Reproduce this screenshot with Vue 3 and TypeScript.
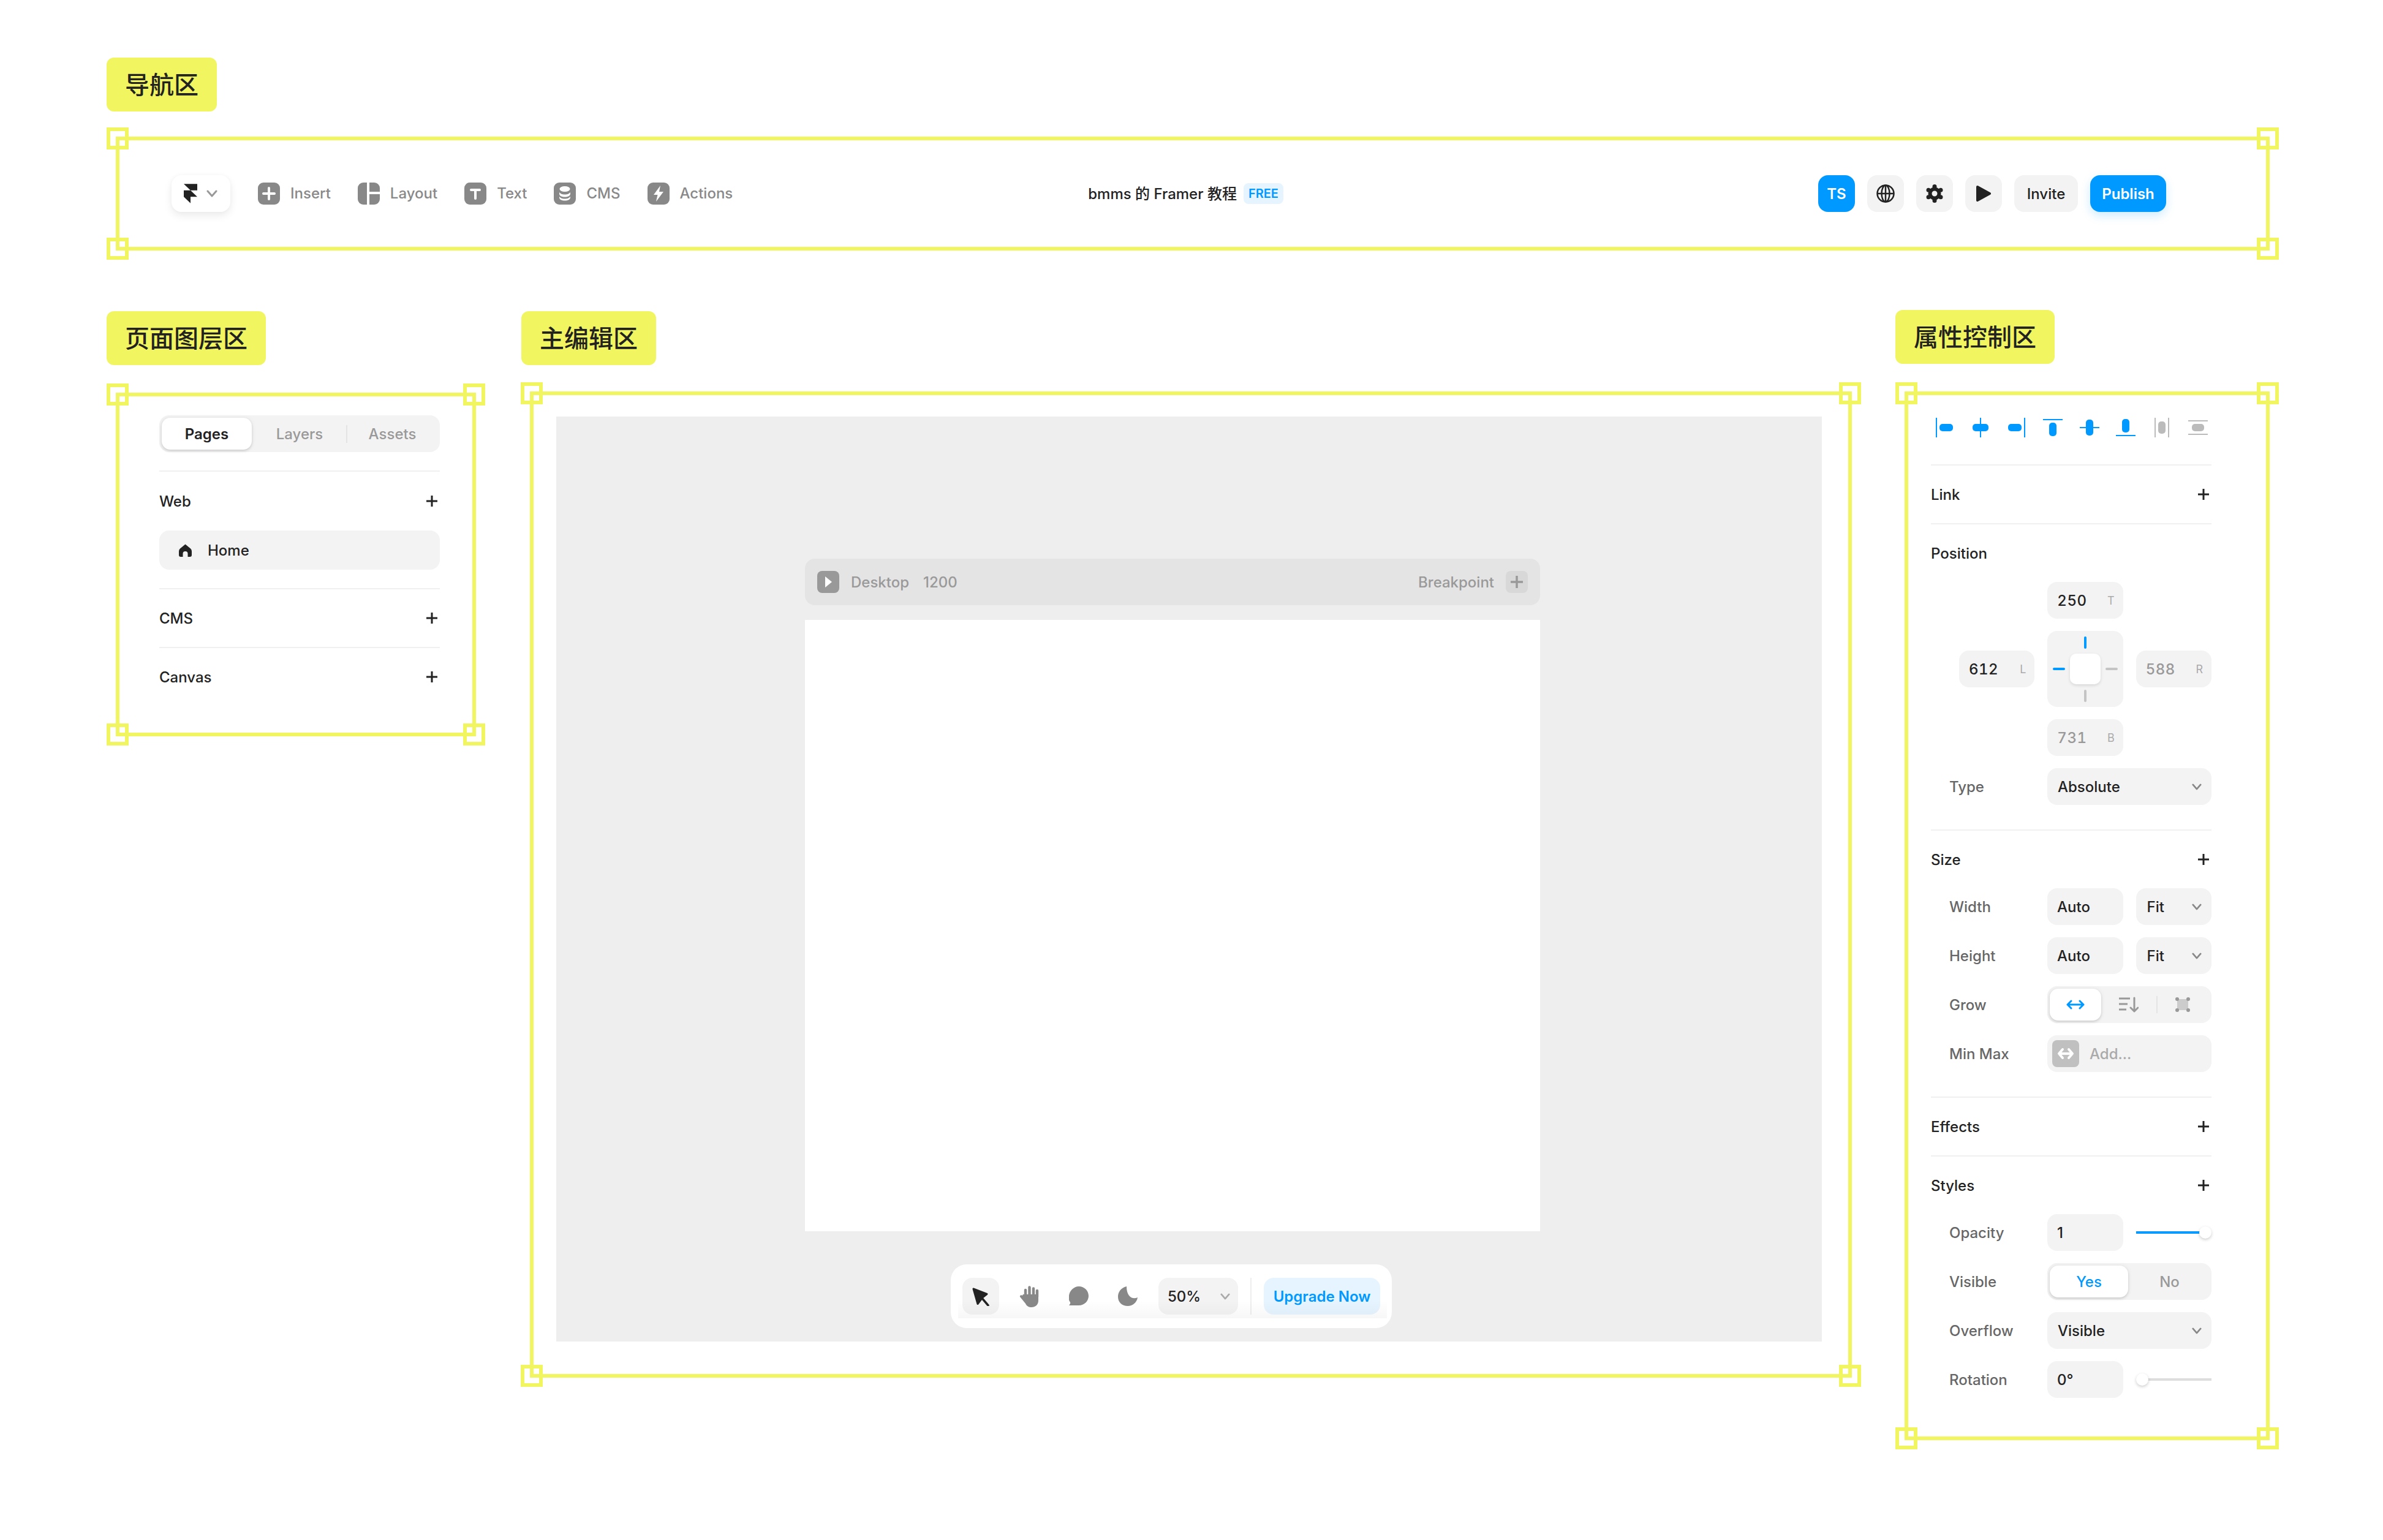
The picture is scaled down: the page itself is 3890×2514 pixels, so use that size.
<template>
  <div class="page">
    <!-- 导航区 -->
    <div class="tag">导航区</div>
    <section class="frame frame-nav">
      <i v-for="c in corners" :key="c" class="handle" :class="c"></i>
      <div class="logo-btn">
        <svg width="22" height="32" viewBox="0 0 14 20"><path fill="#222" d="M0 0h14v6.700H7zM0 6.700h7l7 6.600H7V20l-7-6.700z" /></svg>
        <svg width="18" height="12" viewBox="0 0 18 12"><path class="chev" stroke="#999" d="M2 2l7 8 7-8" /></svg>
      </div>
      <div class="nav-tools">
        <div class="nav-tool">
          <svg class="ico" viewBox="0 0 36 36"><rect width="36" height="36" rx="9" fill="#888" /><path class="w4" d="M18 9v18M9 18h18" /></svg>
          <span>Insert</span>
        </div>
        <div class="nav-tool">
          <svg class="ico" viewBox="0 0 36 36"><rect width="36" height="36" rx="9" fill="#888" /><path stroke="#fff" stroke-width="4" d="M17 0v36M17 17h19" /></svg>
          <span>Layout</span>
        </div>
        <div class="nav-tool">
          <svg class="ico" viewBox="0 0 36 36"><rect width="36" height="36" rx="9" fill="#888" /><path class="w4" d="M11 12h14M18 12v14" /></svg>
          <span>Text</span>
        </div>
        <div class="nav-tool">
          <svg class="ico" viewBox="0 0 36 36">
            <rect width="36" height="36" rx="9" fill="#888" />
            <ellipse cx="18" cy="10.500" rx="8.500" ry="4.500" fill="#fff" />
            <path fill="#fff" d="M9 15.500c1 2.500 4.500 4 9 4s8-1.500 9-4v3c0 3-4 5-9 5s-9-2-9-5zM9 22.500c1 2.500 4.500 4 9 4s8-1.500 9-4v2c0 3-4 5-9 5s-9-2-9-5z" />
          </svg>
          <span>CMS</span>
        </div>
        <div class="nav-tool">
          <svg class="ico" viewBox="0 0 36 36"><rect width="36" height="36" rx="9" fill="#888" /><path fill="#fff" d="M21 5L10 20h6.500L14 31l12-16h-7z" /></svg>
          <span>Actions</span>
        </div>
      </div>
      <div class="title">
        <span class="title-text">bmms 的 Framer 教程</span>
        <b class="free">FREE</b>
      </div>
      <div class="nav-actions">
        <div class="square ts">TS</div>
        <div class="square">
          <svg width="30" height="30" viewBox="0 0 30 30" fill="none" stroke="#222" stroke-width="2.500">
            <circle cx="15" cy="15" r="13.500" />
            <ellipse cx="15" cy="15" rx="6.500" ry="13.500" />
            <path d="M15 1.500v27M1.500 15h27" />
          </svg>
        </div>
        <div class="square">
          <svg width="30" height="30" viewBox="0 0 30 30">
            <circle cx="15" cy="15" r="7.500" fill="none" stroke="#222" stroke-width="6" />
            <circle v-for="g in gearLobes" :key="g[0]" :cx="g[0]" :cy="g[1]" r="3.500" fill="#222" />
          </svg>
        </div>
        <div class="square">
          <svg width="24" height="26" viewBox="0 0 24 26"><path fill="#222" stroke="#222" stroke-width="4" stroke-linejoin="round" d="M2 2l20 11L2 24z" /></svg>
        </div>
        <div class="text-btn">Invite</div>
        <div class="text-btn publish">Publish</div>
      </div>
    </section>

    <div class="columns">
      <!-- 页面图层区 -->
      <div class="column col-left">
        <div class="tag">页面图层区</div>
        <section class="frame frame-left">
          <i v-for="c in corners" :key="c" class="handle" :class="c"></i>
          <div class="tabs">
            <div class="tab active">Pages</div>
            <div class="tab second">Layers</div>
            <div class="tab third">Assets</div>
          </div>
          <div class="sec first">
            <div class="sec-head tall">
              <span>Web</span>
              <svg class="plus" viewBox="0 0 20 20"><path d="M10 1v18M1 10h18" /></svg>
            </div>
            <div class="page-row">
              <svg width="21" height="21" viewBox="0 0 21 21"><path fill="#222" d="M10.500 0.500L19 7.500Q21 9.200 21 12V18Q21 21 18 21H14.500V16A4 4 0 0 0 6.500 16V21H3Q0 21 0 18V12Q0 9.200 2 7.500z" /></svg>
              <span>Home</span>
            </div>
          </div>
          <div class="sec">
            <div class="sec-head">
              <span>CMS</span>
              <svg class="plus" viewBox="0 0 20 20"><path d="M10 1v18M1 10h18" /></svg>
            </div>
          </div>
          <div class="sec">
            <div class="sec-head">
              <span>Canvas</span>
              <svg class="plus" viewBox="0 0 20 20"><path d="M10 1v18M1 10h18" /></svg>
            </div>
          </div>
        </section>
      </div>

      <!-- 主编辑区 -->
      <div class="column col-main">
        <div class="tag">主编辑区</div>
        <section class="frame frame-main">
          <i v-for="c in corners" :key="c" class="handle" :class="c"></i>
          <div class="canvas">
            <div class="bp-head">
              <svg width="36" height="36" viewBox="0 0 36 36"><rect width="36" height="36" rx="8" fill="#999" /><path fill="#fff" d="M13 9l11 9-11 9z" /></svg>
              <span class="bp-name">Desktop</span>
              <span class="bp-size">1200</span>
              <span class="bp-add">Breakpoint</span>
              <div class="bp-plus">
                <svg width="20" height="20" viewBox="0 0 20 20"><path stroke="#999" stroke-width="3.500" d="M10 0v20M0 10h20" /></svg>
              </div>
            </div>
            <div class="artboard"></div>
            <div class="toolbar">
              <div class="tool on">
                <svg width="30" height="31" viewBox="0 0 30 31">
                  <path fill="#222" stroke="#222" stroke-width="3" stroke-linejoin="round" d="M3 3l22 8.500-7 5.500-8 10.500z" />
                  <path stroke="#222" stroke-width="3.500" stroke-linecap="round" d="M16 17l11 13" />
                </svg>
              </div>
              <div class="tool hand">
                <svg width="33" height="35" viewBox="0 0 33 35">
                  <path fill="#888" d="M7 14h25v10c0 7-5 11-11 11-5 0-8-2-10-6l-9-11c-1-2 2-4 4-2z" />
                  <path stroke="#888" stroke-width="4.400" stroke-linecap="round" d="M11 18V7M17.500 18V2.500M24 18V4.500M30 18V8" />
                </svg>
              </div>
              <div class="tool">
                <svg width="32" height="33" viewBox="0 0 32 33"><path fill="#888" d="M16 0c9 0 16 7 16 15.500S25 31 16 31H0c2-2 2.500-3.500 2-5C-1 22-1 18 0 15 1 7 8 0 16 0z" /></svg>
              </div>
              <div class="tool">
                <svg width="32" height="32" viewBox="0 0 32 32"><path fill="#888" d="M14 0C5 2 0 9 0 17c0 9 7 15 16 15 8 0 15-6 16-14-8 4-18-1-18-18z" /></svg>
              </div>
              <div class="zoom-select">
                <span>50%</span>
                <svg class="chevron" viewBox="0 0 18 12"><path class="chev" stroke="#aaa" d="M2 2l7 8 7-8" /></svg>
              </div>
              <div class="tool-sep"></div>
              <div class="upgrade">Upgrade Now</div>
            </div>
          </div>
        </section>
      </div>

      <!-- 属性控制区 -->
      <div class="column col-right">
        <div class="tag">属性控制区</div>
        <section class="frame frame-right">
          <i v-for="c in corners" :key="c" class="handle" :class="c"></i>
          <div class="align-row">
            <svg v-for="(a, i) in alignIcons" :key="i" width="32" height="32" viewBox="0 0 32 32">
              <rect :x="a.rect[0]" :y="a.rect[1]" :width="a.rect[2]" :height="a.rect[3]" rx="5" :fill="a.color" />
              <path :d="a.lines" :stroke="a.color" stroke-width="2" />
            </svg>
          </div>

          <div class="sec">
            <div class="sec-head">
              <span>Link</span>
              <svg class="plus" viewBox="0 0 20 20"><path d="M10 1v18M1 10h18" /></svg>
            </div>
          </div>

          <div class="sec pad">
            <div class="sec-head"><span>Position</span></div>
            <div class="pos-grid">
              <div class="field pos-t"><span>250</span><em>T</em></div>
              <div class="field pos-l"><span>612</span><em>L</em></div>
              <div class="cross">
                <i class="tick v blue t"></i>
                <i class="tick h blue l"></i>
                <i class="cross-box"></i>
                <i class="tick h r"></i>
                <i class="tick v b"></i>
              </div>
              <div class="field pos-r dim"><span>588</span><em>R</em></div>
              <div class="field pos-b dim"><span>731</span><em>B</em></div>
            </div>
            <div class="prop">
              <label>Type</label>
              <div class="prop-body">
                <div class="field select"><span>Absolute</span><svg class="chevron" viewBox="0 0 18 12"><path class="chev" stroke="#888" d="M2 2l7 8 7-8" /></svg></div>
              </div>
            </div>
          </div>

          <div class="sec pad">
            <div class="sec-head">
              <span>Size</span>
              <svg class="plus" viewBox="0 0 20 20"><path d="M10 1v18M1 10h18" /></svg>
            </div>
            <div v-for="(name, i) in ['Width', 'Height']" :key="name" class="prop" :class="{ top: i === 0 }">
              <label>{{ name }}</label>
              <div class="prop-body">
                <div class="field half"><span>Auto</span></div>
                <div class="field half select fit"><span>Fit</span><svg class="chevron" viewBox="0 0 18 12"><path class="chev" stroke="#888" d="M2 2l7 8 7-8" /></svg></div>
              </div>
            </div>
            <div class="prop">
              <label>Grow</label>
              <div class="prop-body">
                <div class="seg">
                  <div class="seg-on grow-on">
                    <svg width="30" height="16" viewBox="0 0 30 16" fill="none" stroke="#09f" stroke-width="3" stroke-linecap="round" stroke-linejoin="round"><path d="M2 8h26M8 2L2 8l6 6M22 2l6 6-6 6" /></svg>
                  </div>
                  <div class="seg-cell grow-b">
                    <svg width="32" height="26" viewBox="0 0 32 26" fill="none" stroke="#999" stroke-width="3"><path d="M0 3h18M0 12h14M0 21h12" /><path stroke-linecap="round" stroke-linejoin="round" d="M25 2v21M19 18l6 6 6-6" /></svg>
                  </div>
                  <div class="seg-cell grow-c">
                    <svg width="24" height="24" viewBox="0 0 24 24"><rect x="3" y="3" width="18" height="18" fill="#ccc" /><circle cx="3" cy="3" r="3" fill="#999" /><circle cx="21" cy="3" r="3" fill="#999" /><circle cx="3" cy="21" r="3" fill="#999" /><circle cx="21" cy="21" r="3" fill="#999" /></svg>
                  </div>
                </div>
              </div>
            </div>
            <div class="prop">
              <label>Min Max</label>
              <div class="prop-body">
                <div class="minmax">
                  <div class="minmax-ico">
                    <svg width="28" height="20" viewBox="0 0 28 20" fill="none" stroke="#fff" stroke-width="4" stroke-linecap="round" stroke-linejoin="round"><path d="M3 10h22M9 3l-6 7 6 7M19 3l6 7-6 7" /></svg>
                  </div>
                  <span>Add...</span>
                </div>
              </div>
            </div>
          </div>

          <div class="sec">
            <div class="sec-head">
              <span>Effects</span>
              <svg class="plus" viewBox="0 0 20 20"><path d="M10 1v18M1 10h18" /></svg>
            </div>
          </div>

          <div class="sec last">
            <div class="sec-head">
              <span>Styles</span>
              <svg class="plus" viewBox="0 0 20 20"><path d="M10 1v18M1 10h18" /></svg>
            </div>
            <div class="prop top">
              <label>Opacity</label>
              <div class="prop-body">
                <div class="field half"><span>1</span></div>
                <div class="slider half">
                  <i class="track blue"></i>
                  <i class="knob end"></i>
                </div>
              </div>
            </div>
            <div class="prop">
              <label>Visible</label>
              <div class="prop-body">
                <div class="seg">
                  <div class="seg-on yes">Yes</div>
                  <div class="seg-cell no">No</div>
                </div>
              </div>
            </div>
            <div class="prop">
              <label>Overflow</label>
              <div class="prop-body">
                <div class="field select"><span>Visible</span><svg class="chevron" viewBox="0 0 18 12"><path class="chev" stroke="#888" d="M2 2l7 8 7-8" /></svg></div>
              </div>
            </div>
            <div class="prop">
              <label>Rotation</label>
              <div class="prop-body">
                <div class="field half"><span>0°</span></div>
                <div class="slider half">
                  <i class="knob start"></i>
                  <i class="track"></i>
                </div>
              </div>
            </div>
          </div>
        </section>
      </div>
    </div>
  </div>
</template>

<script setup lang="ts">
const corners = ["tl", "tr", "bl", "br"];

// six lobes round the centre of the gear, first one pointing up
const gearLobes = [0, 60, 120, 180, 240, 300].map((deg) => {
  const rad = (deg * Math.PI) / 180;
  return [15 + 11.5 * Math.sin(rad), 15 - 11.5 * Math.cos(rad)];
});

const blue = "#09f";
const grey = "#bbb";
const alignIcons = [
  { rect: [8, 10, 22, 12], lines: "M3 0v32", color: blue },
  { rect: [3, 10, 26, 12], lines: "M16 0v32", color: blue },
  { rect: [2, 10, 22, 12], lines: "M29 0v32", color: blue },
  { rect: [10, 8, 12, 22], lines: "M0 3h32", color: blue },
  { rect: [10, 3, 12, 26], lines: "M0 16h32", color: blue },
  { rect: [10, 2, 12, 22], lines: "M0 29h32", color: blue },
  { rect: [10, 6, 12, 20], lines: "M5 0v32M27 0v32", color: grey },
  { rect: [6, 10, 20, 12], lines: "M0 5h32M0 27h32", color: grey },
];
</script>

<style scoped>
.page {
  width: 3890px;
  height: 2514px;
  box-sizing: border-box;
  padding: 94px 0 0 174px;
  background: #fff;
  overflow: hidden;
  font-family: Inter, "Noto Sans CJK SC", sans-serif;
  font-size: 24px;
  font-weight: 500;
  color: #222;
}

.tag {
  display: inline-flex;
  align-items: center;
  height: 88px;
  box-sizing: border-box;
  padding: 0 30px 5px;
  border-radius: 12px;
  background: #f0f560;
  font-family: "Noto Sans CJK SC", sans-serif;
  font-size: 40px;
  font-weight: 500;
  line-height: 1;
  width: max-content;
}

.frame {
  position: relative;
  box-sizing: border-box;
  border: 6px solid #f0f560;
}

.handle {
  position: absolute;
  width: 36px;
  height: 36px;
  box-sizing: border-box;
  border: 6px solid #f0f560;
}
.handle.tl { left: -21px; top: -21px; }
.handle.tr { right: -21px; top: -21px; }
.handle.bl { left: -21px; bottom: -21px; }
.handle.br { right: -21px; bottom: -21px; }

/* nav */
.frame-nav {
  display: flex;
  align-items: center;
  width: 3516px;
  height: 186px;
  margin: 41px 0 0 15px;
  padding: 0 163px 0 85px;
}

.logo-btn {
  display: flex;
  align-items: center;
  gap: 15px;
  width: 96px;
  height: 60px;
  box-sizing: border-box;
  padding-left: 20px;
  border-radius: 16px;
  background: #fff;
  box-shadow: 0 6px 14px rgba(0, 0, 0, 0.08), 0 0 6px rgba(0, 0, 0, 0.03);
}

.chev {
  fill: none;
  stroke-width: 3;
  stroke-linecap: round;
  stroke-linejoin: round;
}

.nav-tools {
  display: flex;
  gap: 44px;
  margin-left: 45px;
}

.nav-tool {
  display: flex;
  align-items: center;
  gap: 17px;
  color: #888;
  line-height: 36px;
}

.ico {
  width: 36px;
  height: 36px;
  overflow: hidden;
}

.w4 {
  fill: none;
  stroke: #fff;
  stroke-width: 4;
  stroke-linecap: round;
}

.title {
  display: flex;
  align-items: center;
  gap: 11px;
  margin-left: 580px;
  white-space: nowrap;
}

.title-text {
  margin-bottom: 4px;
}

.free {
  height: 34px;
  padding: 0 8px;
  border-radius: 8px;
  background: #e6f4ff;
  color: #09f;
  font-size: 20px;
  font-weight: 600;
  line-height: 34px;
}

.nav-actions {
  display: flex;
  gap: 20px;
  margin-left: auto;
}

.square,
.text-btn {
  display: flex;
  align-items: center;
  justify-content: center;
  height: 60px;
  border-radius: 16px;
  background: #f3f3f3;
}
.square { width: 60px; }
.text-btn { width: 104px; }

.ts {
  background: #09f;
  color: #fff;
  font-weight: 600;
}

.publish {
  width: 124px;
  background: #09f;
  color: #fff;
  font-weight: 600;
  box-shadow: 0 6px 16px rgba(0, 153, 255, 0.2);
}

/* columns */
.columns {
  display: flex;
}
.column {
  display: flex;
  flex-direction: column;
  align-items: flex-start;
}
.col-left { margin-top: 99px; }
.col-main { margin: 99px 0 0 74px; }
.col-right { margin: 97px 0 0 71px; }

.frame-left {
  width: 588px;
  margin: 45px 0 0 15px;
  padding: 31px 53px 44px 65px;
}
.frame-main {
  width: 2158px;
  margin: 43px 0 0 14px;
  padding: 35px 43px 53px 37px;
}
.frame-right {
  width: 596px;
  margin: 45px 0 0 15px;
  padding: 33px 89px 63px 37px;
}

/* left panel */
.tabs {
  display: flex;
  height: 60px;
  box-sizing: border-box;
  padding: 4px;
  border-radius: 16px;
  background: #f3f3f3;
  margin-bottom: 30px;
}
.tab {
  display: flex;
  align-items: center;
  justify-content: center;
  color: #999;
}
.tab.active {
  width: 147px;
  border-radius: 14px;
  background: #fff;
  color: #222;
  font-weight: 600;
  box-shadow: 0 2px 4px rgba(0, 0, 0, 0.15), 0 0 10px rgba(0, 0, 0, 0.05);
}
.tab.second { width: 156px; }
.tab.third {
  position: relative;
  flex: 1;
}
.tab.third::before {
  content: "";
  position: absolute;
  left: -2px;
  top: 12px;
  bottom: 11px;
  width: 2px;
  background: #e4e4e4;
}

.sec {
  border-top: 2px solid #f0f0f0;
}
.sec.pad {
  padding-bottom: 40px;
}
.sec.first {
  padding-bottom: 30px;
}
.sec-head {
  display: flex;
  align-items: center;
  justify-content: space-between;
  height: 94px;
  padding-right: 3px;
  font-weight: 550;
}
.sec-head.tall {
  height: 96px;
}

.plus {
  width: 20px;
  height: 20px;
  fill: none;
  stroke: #222;
  stroke-width: 3;
}

.page-row {
  display: flex;
  align-items: center;
  gap: 26px;
  height: 64px;
  padding-left: 32px;
  border-radius: 16px;
  background: #f3f3f3;
}

/* canvas */
.canvas {
  position: relative;
  box-sizing: border-box;
  height: 1510px;
  padding: 232px 0 0 406px;
  background: #eee;
}

.bp-head {
  display: flex;
  align-items: center;
  width: 1200px;
  height: 76px;
  box-sizing: border-box;
  padding: 0 20px;
  border-radius: 16px;
  background: #e4e4e4;
  color: #999;
}
.bp-name { margin-left: 19px; }
.bp-size { margin-left: 23px; }
.bp-add { margin-left: auto; }
.bp-plus {
  display: flex;
  align-items: center;
  justify-content: center;
  width: 36px;
  height: 36px;
  margin-left: 19px;
  border-radius: 8px;
  background: #d8d8d8;
}

.artboard {
  width: 1200px;
  height: 998px;
  margin-top: 24px;
  background: #fff;
}

.toolbar {
  position: relative;
  display: flex;
  align-items: center;
  width: 720px;
  height: 104px;
  box-sizing: border-box;
  margin: 54px 0 0 238px;
  padding: 0 19px;
  gap: 20px;
  border-radius: 26px;
  background: #fff;
}
.toolbar::after {
  content: "";
  position: absolute;
  left: 12px;
  right: 8px;
  bottom: 16px;
  height: 30px;
  background: linear-gradient(rgba(0, 0, 0, 0), rgba(0, 0, 0, 0.03));
  pointer-events: none;
}

.tool {
  display: flex;
  align-items: center;
  justify-content: center;
  width: 60px;
  height: 60px;
  border-radius: 16px;
}
.tool.on {
  background: #f3f3f3;
}
.tool.hand svg {
  margin-left: -4px;
}

.zoom-select {
  display: flex;
  align-items: center;
  justify-content: space-between;
  width: 130px;
  height: 60px;
  box-sizing: border-box;
  padding: 0 13px 0 15px;
  border-radius: 16px;
  background: #f3f3f3;
}

.tool-sep {
  width: 2px;
  height: 60px;
  background: #eee;
}

.upgrade {
  display: flex;
  align-items: center;
  justify-content: center;
  width: 190px;
  height: 60px;
  border-radius: 16px;
  background: #e6f4ff;
  color: #09f;
  font-weight: 600;
  white-space: nowrap;
}

/* right panel */
.align-row {
  display: flex;
  justify-content: space-between;
  height: 40px;
  box-sizing: border-box;
  padding: 4px 6px 0;
  margin-bottom: 40px;
}

.pos-grid {
  display: grid;
  grid-template-columns: repeat(3, 1fr);
  column-gap: 21px;
  row-gap: 20px;
  margin-left: 46px;
  align-items: center;
}
.pos-grid .field span {
  font-variant-numeric: tabular-nums;
  letter-spacing: 0.5px;
}
.pos-t { grid-column: 2; }
.pos-l { grid-column: 1; grid-row: 2; }
.pos-r { grid-column: 3; grid-row: 2; }
.pos-b { grid-column: 2; grid-row: 3; }

.field {
  display: flex;
  align-items: center;
  justify-content: space-between;
  height: 60px;
  box-sizing: border-box;
  padding: 0 14px 0 16px;
  border-radius: 16px;
  background: #f3f3f3;
  min-width: 0;
}
.field em {
  color: #aaa;
  font-size: 18px;
  font-style: normal;
  font-weight: 400;
}
.field.dim {
  color: #999;
}
.field.select {
  padding: 0 16px 0 17px;
}
.field.select.fit {
  padding-left: 18px;
}

.chevron {
  width: 16px;
  height: 11px;
  flex: none;
}

.cross {
  grid-column: 2;
  grid-row: 2;
  display: grid;
  grid-template-columns: 1fr 50px 1fr;
  grid-template-rows: 1fr 50px 1fr;
  place-items: center;
  height: 124px;
  border-radius: 16px;
  background: #f3f3f3;
}
.cross-box {
  grid-column: 2;
  grid-row: 2;
  width: 50px;
  height: 50px;
  border-radius: 10px;
  background: #fff;
  box-shadow: 0 2px 5px rgba(0, 0, 0, 0.12);
}
.tick {
  border-radius: 2px;
  background: #c4c4c4;
}
.tick.blue { background: #09f; }
.tick.v { width: 4px; height: 20px; grid-column: 2; }
.tick.h { width: 20px; height: 4px; grid-row: 2; }
.tick.t { grid-row: 1; }
.tick.b { grid-row: 3; }
.tick.l { grid-column: 1; }
.tick.r { grid-column: 3; }

.prop {
  display: flex;
  align-items: center;
  height: 60px;
  margin-top: 20px;
}
.prop.top {
  margin-top: 0;
}
.prop label {
  flex: none;
  width: 190px;
  box-sizing: border-box;
  padding-left: 30px;
  color: #666;
}
.prop-body {
  display: flex;
  flex: 1;
  gap: 21px;
  min-width: 0;
}
.prop-body > * {
  flex: 1;
}
.prop-body > .half {
  flex: none;
  width: 123.500px;
}

.seg {
  display: flex;
  height: 60px;
  box-sizing: border-box;
  padding: 4px;
  border-radius: 16px;
  background: #f3f3f3;
}
.seg-on {
  display: flex;
  align-items: center;
  justify-content: center;
  border-radius: 14px;
  background: #fff;
  box-shadow: 0 2px 4px rgba(0, 0, 0, 0.15), 0 0 10px rgba(0, 0, 0, 0.05);
}
.seg-cell {
  display: flex;
  align-items: center;
  justify-content: center;
}
.grow-on { width: 84px; }
.grow-b { width: 90px; }
.grow-c {
  flex: 1;
  position: relative;
}
.grow-c::before {
  content: "";
  position: absolute;
  left: 0;
  top: 12px;
  bottom: 12px;
  width: 2px;
  background: #e4e4e4;
}
.yes {
  width: 128px;
  color: #09f;
}
.no {
  flex: 1;
  padding-left: 3px;
  color: #999;
}

.minmax {
  display: flex;
  align-items: center;
  gap: 17px;
  height: 60px;
  box-sizing: border-box;
  padding-left: 8px;
  border-radius: 16px;
  background: #f3f3f3;
  color: #aaa;
}
.minmax-ico {
  display: flex;
  align-items: center;
  justify-content: center;
  width: 44px;
  height: 44px;
  border-radius: 8px;
  background: #c0c0c0;
}

.slider {
  display: flex;
  align-items: center;
  min-width: 0;
}
.track {
  flex: 1;
  height: 4px;
  background: #ddd;
}
.track.blue {
  background: #09f;
}
.knob {
  flex: none;
  position: relative;
  width: 20px;
  height: 20px;
  border-radius: 50%;
  background: #fff;
  box-shadow: 0 2px 5px rgba(0, 0, 0, 0.2);
}
.knob.end { margin-left: -1px; }
.knob.start { margin-right: -1px; }
</style>

<style>
html,
body {
  margin: 0;
  background: #fff;
}
</style>
